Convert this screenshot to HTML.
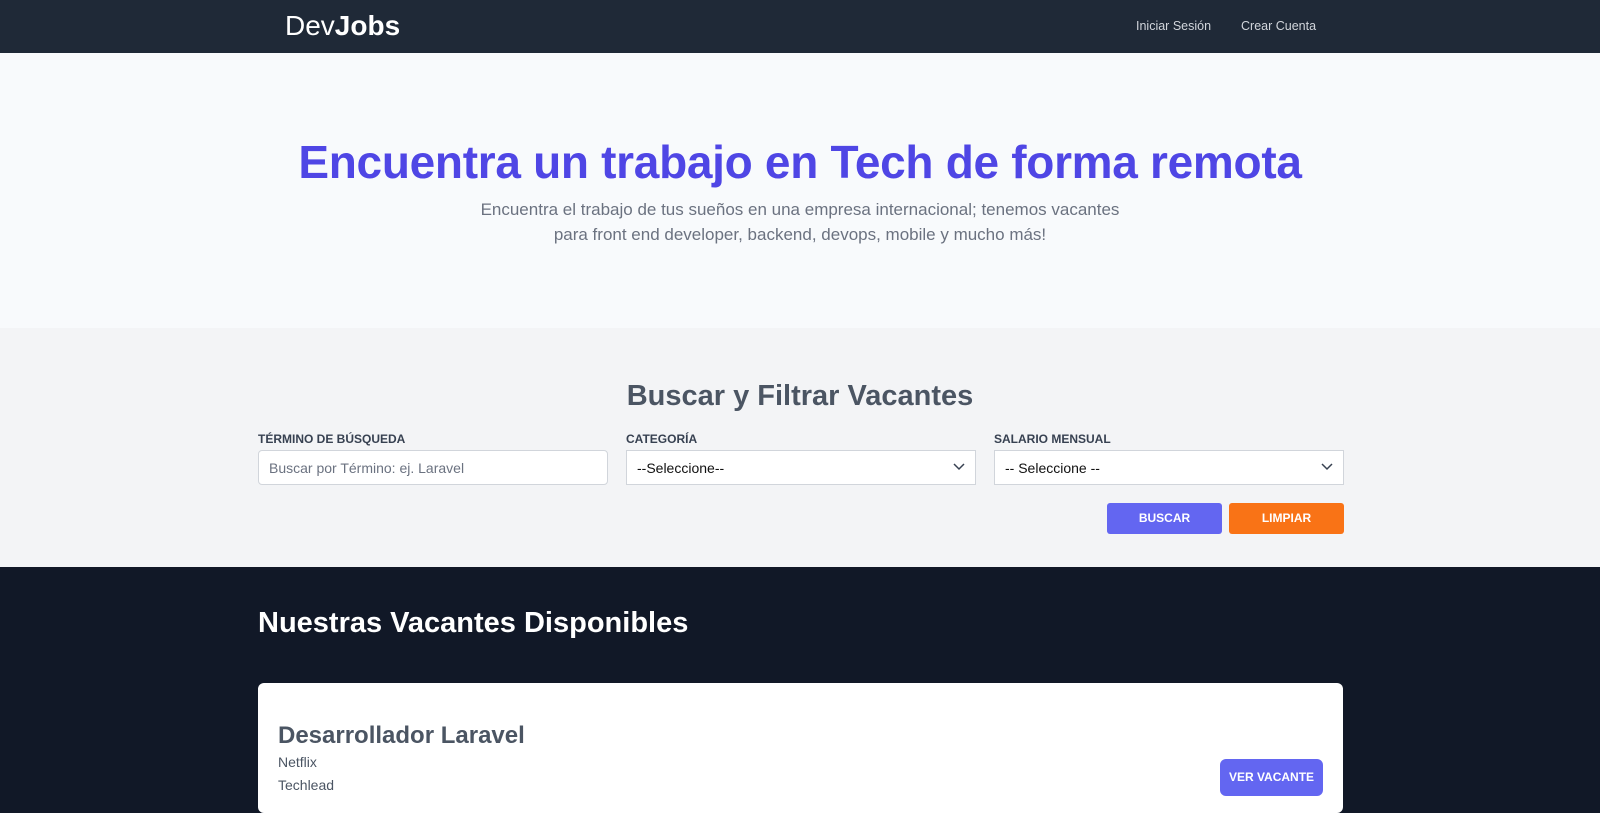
<!DOCTYPE html>
<html><head><meta charset="utf-8"><style>
*{box-sizing:border-box;margin:0;padding:0}
body{width:1600px;height:799px;overflow:hidden;font-family:"Liberation Sans",sans-serif;background:#111827}
.nav{height:53px;background:#1f2937;position:relative}
.logo{position:absolute;left:285px;top:10px;color:#fff;font-size:28px}
.logo b{font-weight:700}
.nav a{position:absolute;top:19px;color:#d1d5db;font-size:12.5px;text-decoration:none}
.hero{height:275px;background:#f8fafc;text-align:center;padding-top:82px}
.hero h1{color:#4f46e5;font-size:46px;font-weight:700;letter-spacing:-0.3px}
.hero p{color:#6b7280;font-size:17px;line-height:25px;margin-top:8px}
.search{height:239px;background:#f3f4f6;position:relative}
.search h2{text-align:center;color:#4b5563;font-size:29px;font-weight:700;padding-top:52px}
.lbl{position:absolute;top:104px;font-size:12px;font-weight:700;color:#374151}
.inp{position:absolute;top:122px;width:350px;height:35px;background:#fff;border:1px solid #d1d5db;font-size:14px;padding:9px 10px;color:#111}
.inp svg{position:absolute;right:10px;top:12px}
.btn{position:absolute;top:175px;width:115px;height:31px;color:#fff;font-size:12px;font-weight:700;text-align:center;line-height:31px;border-radius:3px}
h3{position:absolute;left:258px;top:607px;color:#fff;font-size:29px;font-weight:700}
.card{position:absolute;left:258px;top:683px;width:1085px;height:130px;background:#fff;border-radius:6px}
.card h4{position:absolute;left:20px;top:39px;font-size:24px;color:#4b5563;font-weight:700}
.card .s{position:absolute;left:20px;font-size:14px;color:#4b5563}
</style></head><body>
<div class="nav"><div class="logo">Dev<b>Jobs</b></div><a style="left:1136px">Iniciar Sesión</a><a style="left:1241px">Crear Cuenta</a></div>
<div class="hero"><h1>Encuentra un trabajo en Tech de forma remota</h1><p>Encuentra el trabajo de tus sueños en una empresa internacional; tenemos vacantes<br>para front end developer, backend, devops, mobile y mucho más!</p></div>
<div class="search"><h2>Buscar y Filtrar Vacantes</h2>
<div class="lbl" style="left:258px">TÉRMINO DE BÚSQUEDA</div>
<div class="lbl" style="left:626px">CATEGORÍA</div>
<div class="lbl" style="left:994px">SALARIO MENSUAL</div>
<div class="inp" style="left:258px;color:#6b7280;border-radius:4px">Buscar por Término: ej. Laravel</div>
<div class="inp" style="left:626px">--Seleccione--<svg width="12" height="8"><path d="M1 1l5 5 5-5" stroke="#374151" stroke-width="1.5" fill="none"/></svg></div>
<div class="inp" style="left:994px">-- Seleccione --<svg width="12" height="8"><path d="M1 1l5 5 5-5" stroke="#374151" stroke-width="1.5" fill="none"/></svg></div>
<div class="btn" style="left:1107px;background:#6366f1">BUSCAR</div>
<div class="btn" style="left:1229px;background:#f97316">LIMPIAR</div>
</div>
<h3>Nuestras Vacantes Disponibles</h3>
<div class="card"><h4>Desarrollador Laravel</h4><div class="s" style="top:71px">Netflix</div><div class="s" style="top:94px">Techlead</div>
<div style="position:absolute;left:962px;top:76px;width:103px;height:37px;background:#6366f1;color:#fff;font-size:12px;font-weight:700;text-align:center;line-height:37px;border-radius:6px">VER VACANTE</div></div>
</body></html>
